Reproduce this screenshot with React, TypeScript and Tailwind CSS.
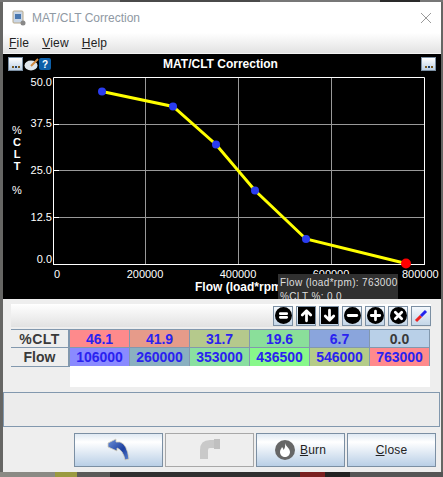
import React from "react";

const pts = [
  [102, 91.5],
  [173, 106.5],
  [216, 144.5],
  [255, 190.5],
  [306, 239],
  [406, 263.5],
];

function DotsBtn() {
  return (
    <div className="w-[15px] h-[14px] border border-[#7b8fa3] bg-gradient-to-b from-white to-[#bcd0e4] flex items-end justify-center pb-[2px] gap-px">
      <span className="w-[2px] h-[2px] bg-[#7a5a20]" />
      <span className="w-[2px] h-[2px] bg-[#20406a]" />
      <span className="w-[2px] h-[2px] bg-[#7a5a20]" />
    </div>
  );
}

function Chart() {
  return (
    <svg width="438" height="206" viewBox="3 74 438 206" className="block">
      {[145.5, 238.5, 331.5].map((x) => (
        <line key={x} x1={x} y1="77" x2={x} y2="264" stroke="#999" strokeWidth="1" />
      ))}
      {[124.5, 170.5, 217.5].map((y) => (
        <g key={y}>
          <line x1="53" y1={y} x2="425" y2={y} stroke="#999" strokeWidth="1" />
          <line x1="53" y1={y} x2="59" y2={y} stroke="#fff" strokeWidth="1" />
        </g>
      ))}
      <path d="M53.5 264V77.5H424.5V264M53 264.5H425" fill="none" stroke="#fff" strokeWidth="1" />
      <polyline
        points={pts.map((p) => p.join(",")).join(" ")}
        fill="none"
        stroke="#ffff00"
        strokeWidth="3"
      />
      {pts.slice(0, 5).map((p) => (
        <circle key={p[0]} cx={p[0]} cy={p[1]} r="4" fill="#2a3cf0" />
      ))}
      <circle cx="406" cy="263.5" r="5" fill="#ff0000" />
      <g fill="#fff" fontSize="11" fontFamily="'Liberation Sans', sans-serif">
        <text x="52" y="86" textAnchor="end">50.0</text>
        <text x="52" y="127" textAnchor="end">37.5</text>
        <text x="52" y="174" textAnchor="end">25.0</text>
        <text x="52" y="221" textAnchor="end">12.5</text>
        <text x="52" y="263" textAnchor="end">0.0</text>
        <text x="57" y="278" textAnchor="middle">0</text>
        <text x="145" y="278" textAnchor="middle">200000</text>
        <text x="238" y="278" textAnchor="middle">400000</text>
        <text x="331" y="278" textAnchor="middle">600000</text>
        <text x="402" y="278" textAnchor="start">800000</text>
      </g>
      <g fill="#fff" fontFamily="'Liberation Sans', sans-serif" textAnchor="middle">
        <text x="17" y="134" fontSize="11">%</text>
        <text x="17" y="146" fontSize="11" fontWeight="bold">C</text>
        <text x="17" y="158" fontSize="11" fontWeight="bold">L</text>
        <text x="17" y="170" fontSize="11" fontWeight="bold">T</text>
        <text x="17" y="194" fontSize="11">%</text>
      </g>
    </svg>
  );
}

function ToolBtn({ children }: { children: React.ReactNode }) {
  return (
    <div className="w-[20px] h-[20px] border border-[#7b8fa3] bg-gradient-to-b from-[#f4f8fc] to-[#c4d6e8] flex items-center justify-center">
      {children}
    </div>
  );
}

function Round({ d }: { d: string }) {
  return (
    <svg width="17" height="17" viewBox="0 0 16 16">
      <circle cx="8" cy="8" r="8" fill="#000" />
      <path d={d} stroke="#fff" strokeWidth="2.6" fill="none" strokeLinecap="round" />
    </svg>
  );
}

function Square({ d }: { d: string }) {
  return (
    <svg width="17" height="17" viewBox="0 0 16 16">
      <rect width="16" height="16" fill="#000" />
      <path d={d} stroke="#fff" strokeWidth="2.6" fill="none" strokeLinecap="round" strokeLinejoin="round" />
    </svg>
  );
}

const row1 = [
  ["46.1", "bg-[#fe8a8c]", "text-[#2a22f0]"],
  ["41.9", "bg-[#e69b8a]", "text-[#2a22f0]"],
  ["31.7", "bg-[#b5c98c]", "text-[#2a22f0]"],
  ["19.6", "bg-[#8adf9a]", "text-[#2a22f0]"],
  ["6.7", "bg-[#8aa5dc]", "text-[#2a22f0]"],
  ["0.0", "bg-[#b9d0e8]", "text-[#3a3a3a]"],
];
const row2 = [
  ["106000", "bg-[#8a8aff]"],
  ["260000", "bg-[#8ab0c0]"],
  ["353000", "bg-[#8adfa0]"],
  ["436500", "bg-[#88f88a]"],
  ["546000", "bg-[#b5cc88]"],
  ["763000", "bg-[#ff8a8c]"],
];

function ActionBtn({ children, off }: { children: React.ReactNode; off?: boolean }) {
  return (
    <div
      className={
        "w-[89px] h-[34px] flex items-center justify-center border " +
        (off
          ? "border-[#a8a8a8] bg-[#eeeeee]"
          : "border-[#7b8fa3] bg-gradient-to-b from-[#dfe9f3] via-white via-25% to-[#b9cfe6]")
      }
    >
      {children}
    </div>
  );
}

export default function App() {
  return (
    <div
      className="w-[443px] h-[477px] overflow-hidden bg-[#666664] flex flex-col"
      style={{ fontFamily: "'Liberation Sans', Arial, sans-serif" }}
    >
      <div className="h-[2px] flex shrink-0">
        <div className="w-[120px] bg-[#777]" />
        <div className="w-[140px] bg-[#4a4a4a]" />
        <div className="w-[120px] bg-[#777]" />
        <div className="w-[40px] bg-[#2a2a2a]" />
        <div className="flex-1 bg-[#777]" />
      </div>

      <div className="ml-[3px] w-[438px] h-[470px] bg-[#eeeeee] flex flex-col shrink-0 relative">
        <div className="h-[31px] bg-white flex items-center pl-[8px] shrink-0">
          <svg width="16" height="16" viewBox="0 0 16 16" className="mr-[5px]">
            <rect x="2" y="1" width="10" height="12" rx="1" fill="#c9d6e6" stroke="#b8a888" />
            <rect x="4" y="4" width="6" height="5" fill="#4a78b0" />
            <circle cx="12" cy="13" r="2.5" fill="#888" />
          </svg>
          <span className="text-[12px] text-[#8f99a3]">MAT/CLT Correction</span>
          <svg width="10" height="10" viewBox="0 0 10 10" className="ml-auto mr-[10px]">
            <path d="M0 0L10 10M10 0L0 10" stroke="#9a9a9a" strokeWidth="1" />
          </svg>
        </div>
        <div className="h-[21px] bg-gradient-to-b from-white to-[#e2e2e2] border-b border-[#f4f4f4] flex items-center gap-[13px] pl-[6px] text-[12px] tracking-[0.2px] text-[#222] shrink-0">
          <span><u>F</u>ile</span>
          <span><u>V</u>iew</span>
          <span><u>H</u>elp</span>
        </div>

        <div className="h-[245px] bg-black relative shrink-0 flex flex-col">
          <div className="h-[20px] flex items-center pl-[5px] pr-[5px] shrink-0">
            <DotsBtn />
            <svg width="15" height="13" viewBox="0 0 15 13" className="ml-[1px]">
              <ellipse cx="7" cy="7.5" rx="6.5" ry="5" fill="#dfe6ec" />
              <path d="M7 8L14 1" stroke="#d08a40" strokeWidth="2" />
            </svg>
            <div className="w-[12px] h-[12px] bg-[#0d5fa8] rounded-[2px] text-white text-[10px] font-bold flex items-center justify-center">?</div>
            <div className="flex-1 text-center text-white text-[12px] font-bold pr-[31px]">MAT/CLT Correction</div>
            <DotsBtn />
          </div>
          <Chart />
          <div className="text-white text-[12px] font-bold pl-[192px] leading-[14px]">Flow (load*rpm)</div>
          <div className="absolute left-[275px] top-[220px] w-[120px] h-[25px] bg-[#303030] overflow-hidden text-[#dedede] text-[10px] leading-[13.5px] pl-[2px] pt-[2px] tracking-[0.35px] whitespace-nowrap">
            <div>Flow (load*rpm): 763000</div>
            <div>%CLT %: 0.0</div>
          </div>
        </div>

        <div className="pl-[8px] pt-[5px] shrink-0">
          <div className="w-[420px] h-[23px] bg-gradient-to-b from-white to-[#e2e2e2] flex items-center justify-end gap-[3px]">
            <ToolBtn><Round d="M5 6.3H11M5 9.7H11" /></ToolBtn>
            <ToolBtn><Square d="M8 13V4M4 7.5L8 3.5L12 7.5" /></ToolBtn>
            <ToolBtn><Square d="M8 3V12M4 8.5L8 12.5L12 8.5" /></ToolBtn>
            <ToolBtn><Round d="M4 8H12" /></ToolBtn>
            <ToolBtn><Round d="M4 8H12M8 4V12" /></ToolBtn>
            <ToolBtn><Round d="M5 5L11 11M11 5L5 11" /></ToolBtn>
            <ToolBtn>
              <svg width="16" height="16" viewBox="0 0 16 16">
                <path d="M3 13L8 8" stroke="#ee2222" strokeWidth="3" />
                <path d="M8 8L13 3" stroke="#2222ee" strokeWidth="3" />
              </svg>
            </ToolBtn>
          </div>
          <div className="flex mt-[2px]">
            <div className="w-[59px] shrink-0">
              <div className="h-[18px] pt-[1px] border-t border-r-2 border-[#8298ae] flex items-center justify-center text-[14px] font-bold text-[#3a3a3a] tracking-[0.5px]">%CLT</div>
              <div className="h-[20px] border-t border-b border-r-2 border-[#8298ae] flex items-center justify-center text-[14px] font-bold text-[#3a3a3a]">Flow</div>
            </div>
            <div className="w-[360px]">
              <div className="flex h-[18px]">
                {row1.map((c) => (
                  <div key={c[0]} className={"flex-1 pt-[1px] border-t border-r border-[#8298ae] flex items-center justify-center text-[14px] font-bold " + c[1] + " " + c[2]}>
                    {c[0]}
                  </div>
                ))}
              </div>
              <div className="flex h-[19px]">
                {row2.map((c) => (
                  <div key={c[0]} className={"flex-1 border-t border-r border-[#8298ae] flex items-center justify-center text-[14px] font-bold text-[#2a22f0] " + c[1]}>
                    {c[0]}
                  </div>
                ))}
              </div>
              <div className="h-[21px] bg-white" />
            </div>
          </div>
        </div>

        <div className="h-[35px] mt-[5px] mr-[1px] border border-[#8298ae] bg-[#ececec] shrink-0" />

        <div className="flex gap-[2px] pl-[71px] mt-[6px] shrink-0">
          <ActionBtn>
            <svg width="24" height="24" viewBox="0 0 24 24">
              <defs>
                <linearGradient id="undoFill" x1="0" y1="0" x2="1" y2="1">
                  <stop offset="0" stopColor="#6f92d8" />
                  <stop offset="0.6" stopColor="#1c3fa0" />
                  <stop offset="1" stopColor="#5f86d0" />
                </linearGradient>
              </defs>
              <path
                d="M1 5L9 1V4H13Q20 6 22 21L18 22Q16 12 10 10V13L1 9Z"
                fill="url(#undoFill)"
                stroke="#d8d2bc"
                strokeWidth="0.8"
              />
            </svg>
          </ActionBtn>
          <ActionBtn off>
            <svg width="24" height="24" viewBox="0 0 24 24">
              <path d="M6 21V12Q6 6 12 6H20" fill="none" stroke="#c9c9c9" strokeWidth="8" />
              <path d="M16 1H22V11H16Z" fill="#c0c0c0" />
            </svg>
          </ActionBtn>
          <ActionBtn>
            <svg width="20" height="20" viewBox="0 0 20 20" className="mr-[5px]">
              <circle cx="10" cy="10" r="10" fill="#666" />
              <path d="M10 3C11 7 15 8 15 12C15 15 12.5 17 10 17C7.5 17 5 15 5 12C5 10 6.5 8.5 7 7C8 8 8.5 9 8.5 10C10 8 10.5 6 10 3Z" fill="#fff" />
            </svg>
            <span className="text-[12px] tracking-[0.2px] text-[#222]"><u>B</u>urn</span>
          </ActionBtn>
          <ActionBtn>
            <span className="text-[12px] tracking-[0.2px] text-[#222]"><u>C</u>lose</span>
          </ActionBtn>
        </div>
      </div>

      <div className="h-[5px] flex shrink-0">
        <div className="w-[55px] bg-[#8a8a84]" />
        <div className="w-[22px] bg-[#9a9a40]" />
        <div className="w-[33px] bg-[#5a5a58]" />
        <div className="w-[190px] bg-[#303030]" />
        <div className="w-[25px] bg-[#7a2020]" />
        <div className="w-[25px] bg-[#222]" />
        <div className="flex-1 bg-[#555]" />
      </div>
    </div>
  );
}
